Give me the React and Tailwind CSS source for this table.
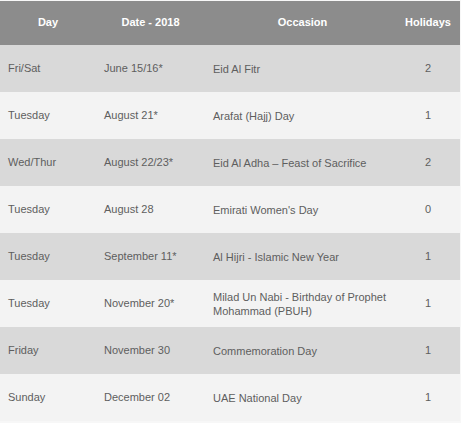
import React from 'react';

const rows = [
  { day: 'Fri/Sat', date: 'June 15/16*', occasion: 'Eid Al Fitr', holidays: 2 },
  { day: 'Tuesday', date: 'August 21*', occasion: 'Arafat (Hajj) Day', holidays: 1 },
  { day: 'Wed/Thur', date: 'August 22/23*', occasion: 'Eid Al Adha – Feast of Sacrifice', holidays: 2 },
  { day: 'Tuesday', date: 'August 28', occasion: "Emirati Women's Day", holidays: 0 },
  { day: 'Tuesday', date: 'September 11*', occasion: 'Al Hijri - Islamic New Year', holidays: 1 },
  { day: 'Tuesday', date: 'November 20*', occasion: 'Milad Un Nabi - Birthday of Prophet Mohammad (PBUH)', holidays: 1 },
  { day: 'Friday', date: 'November 30', occasion: 'Commemoration Day', holidays: 1 },
  { day: 'Sunday', date: 'December 02', occasion: 'UAE National Day', holidays: 1 },
];

export default function App() {
  return (
    <div className="w-[461px] h-[423px] bg-[#f7f7f7] pt-px font-['Liberation_Sans',Arial,sans-serif] text-[11px]">
      <table className="w-[460px] border-collapse table-fixed">
        <colgroup>
          <col className="w-[96px]" />
          <col className="w-[109px]" />
          <col className="w-[195px]" />
          <col className="w-[60px]" />
        </colgroup>
        <thead>
          <tr className="h-[44px] bg-[#8c8c8c] text-white font-bold">
            <th className="px-2 pb-0.5 text-center">Day</th>
            <th className="px-2 pb-0.5 text-center">Date - 2018</th>
            <th className="px-2 pb-0.5 text-center">Occasion</th>
            <th className="pl-0 pr-1 pb-0.5 text-center">Holidays</th>
          </tr>
        </thead>
        <tbody>
          {rows.map((r, i) => (
            <tr key={i} className={`h-[47px] text-[#5e5e5e] ${i % 2 === 0 ? 'bg-[#d9d9d9]' : 'bg-[#f3f3f3]'}`}>
              <td className="px-2 align-middle">{r.day}</td>
              <td className="px-2 align-middle">{r.date}</td>
              <td className="px-2 align-middle leading-[14px]">{r.occasion}</td>
              <td className="pl-0 pr-1 align-middle text-center">{r.holidays}</td>
            </tr>
          ))}
        </tbody>
      </table>
    </div>
  );
}
